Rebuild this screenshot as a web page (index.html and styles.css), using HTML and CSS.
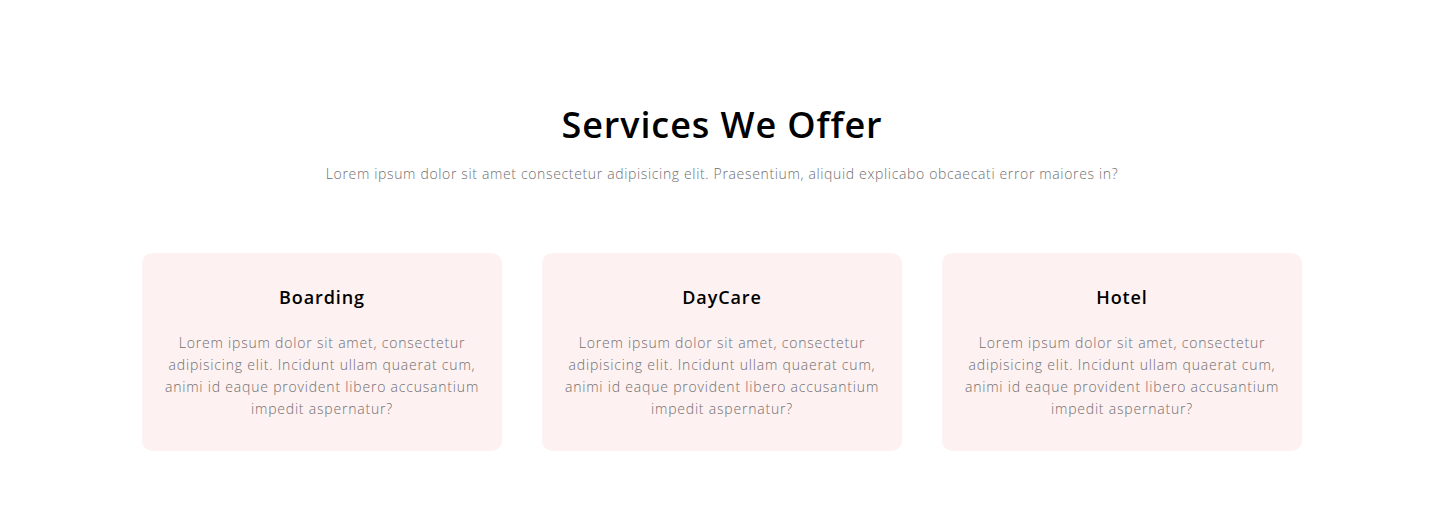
FILE: index.html
```html
<!DOCTYPE html>
<html lang="en">
<head>
<meta charset="utf-8">
<title>Services We Offer</title>
<link rel="stylesheet" href="styles.css">
</head>
<body>
<section class="services">
  <h2 class="services-title">Services We Offer</h2>
  <p class="services-sub">Lorem ipsum dolor sit amet consectetur adipisicing elit. Praesentium, aliquid explicabo obcaecati error maiores in?</p>
  <div class="cards">
    <div class="card">
      <h3 class="card-title">Boarding</h3>
      <p class="card-text">Lorem ipsum dolor sit amet, consectetur adipisicing elit. Incidunt ullam quaerat cum, animi id eaque provident libero accusantium impedit aspernatur?</p>
    </div>
    <div class="card">
      <h3 class="card-title">DayCare</h3>
      <p class="card-text">Lorem ipsum dolor sit amet, consectetur adipisicing elit. Incidunt ullam quaerat cum, animi id eaque provident libero accusantium impedit aspernatur?</p>
    </div>
    <div class="card">
      <h3 class="card-title">Hotel</h3>
      <p class="card-text">Lorem ipsum dolor sit amet, consectetur adipisicing elit. Incidunt ullam quaerat cum, animi id eaque provident libero accusantium impedit aspernatur?</p>
    </div>
  </div>
</section>
</body>
</html>
```
FILE: styles.css
```css
* { box-sizing: border-box; }
body {
  margin: 0;
  background: #fff;
  font-family: "Open Sans", "Liberation Sans", sans-serif;
}
.services {
  padding: 98px 0 59px;
  display: flex;
  flex-direction: column;
  align-items: center;
}
.services-title {
  margin: 0;
  font-size: 36px;
  line-height: 54px;
  font-weight: 600;
  letter-spacing: 0.9px;
  color: #000;
}
.services-sub {
  margin: 11px 0 0;
  font-size: 14px;
  line-height: 21px;
  font-weight: 300;
  letter-spacing: 0.65px;
  color: #6f6f6f;
}
.cards {
  margin-top: 69px;
  width: 1160px;
  display: grid;
  grid-template-columns: repeat(3, 1fr);
  gap: 40px;
}
.card {
  background: #fef1f1;
  border-radius: 10px;
  padding: 31px 20px 31px;
  text-align: center;
}
.card-title {
  margin: 0;
  font-size: 18px;
  line-height: 27px;
  font-weight: 600;
  letter-spacing: 0.9px;
  color: #000;
}
.card-text {
  margin: 21px 0 0;
  font-size: 14px;
  line-height: 22px;
  font-weight: 300;
  letter-spacing: 0.8px;
  color: #6f6f6f;
}
```
